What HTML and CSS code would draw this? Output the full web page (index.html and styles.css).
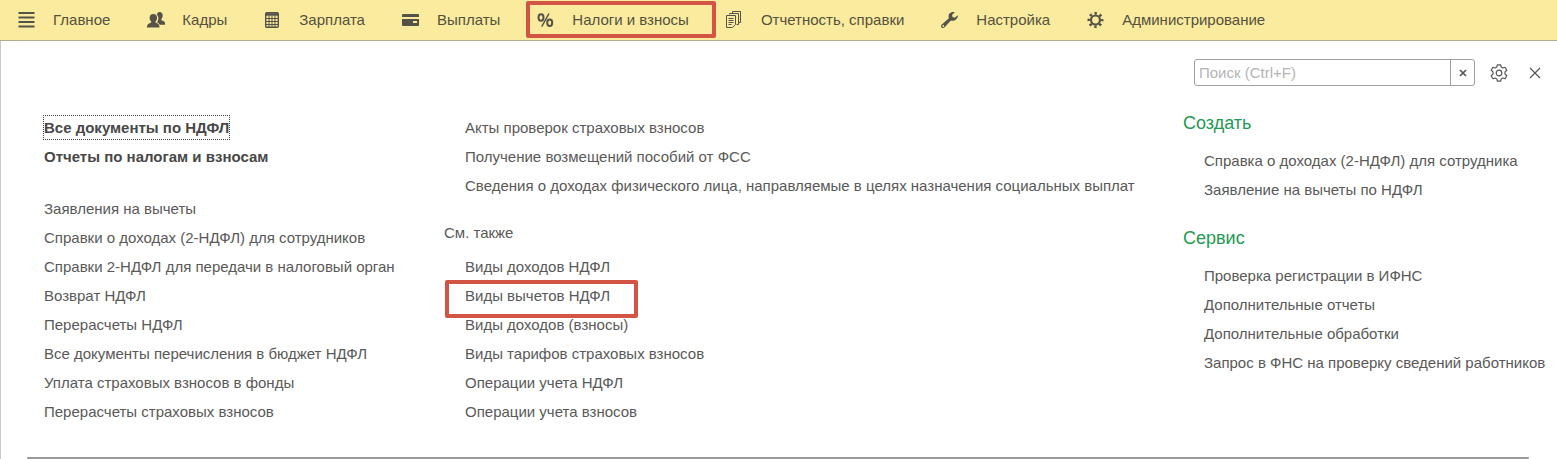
FILE: index.html
```html
<!DOCTYPE html>
<html lang="ru">
<head>
    <meta charset="UTF-8">
    <meta name="viewport" content="width=device-width, initial-scale=1.0">
    <title>Налоги и взносы</title>
    <link rel="stylesheet" href="styles.css">
</head>
<body>

<nav class="sections">
    <a href="#">
        <svg viewBox="0 0 18 18"><path d="M.5 2h16M.5 6.500h16M.5 11h16M.5 15.500h16" stroke="currentColor" stroke-width="2"/></svg>
        Главное
    </a>
    <a href="#">
        <svg viewBox="0 0 18 18">
            <path d="M12.500 1c2 0 3.200 1.500 3.200 3.500 0 1.600-.6 2.700-1.300 3.400v1.300c1.800.7 4 1.300 4 4.500h-5.700c-.6-1.300-1.500-2-2.700-2.500 1.200-1.400 1.500-3 1.300-4.900-.1-1-.6-1.900-1.500-2.500.4-1.800 1.300-2.800 2.700-2.800z"/>
            <path d="M6.300 3c2.300 0 3.800 1.500 3.800 3.800 0 1.700-.8 3-1.600 3.700v1c2 .8 4 1.500 4 5H0c0-3.500 2.200-4.200 4.200-5v-1c-.8-.7-1.600-2-1.600-3.700C2.600 4.500 4 3 6.300 3z"/>
        </svg>
        Кадры
    </a>
    <a href="#">
        <svg viewBox="0 0 18 18">
            <rect class="outline" x="1.700" y="1.700" width="12.600" height="14.600" rx="1" stroke-width="1.400"/>
            <path d="M2 3.500h12" stroke="currentColor" stroke-width="2.500"/>
            <path d="M5 5v11M8 5v11M11 5v11M2 7.500h12M2 10.500h12M2 13.500h12" stroke="currentColor"/>
        </svg>
        Зарплата
    </a>
    <a href="#">
        <svg viewBox="0 0 18 18"><path d="M1 3h15q1 0 1 1v2H0V4q0-1 1-1zM0 8h17v6q0 1-1 1H1q-1 0-1-1zm11 2v2h4v-2z" fill-rule="evenodd"/></svg>
        Выплаты
    </a>
    <a href="#" class="current">
        <svg viewBox="0 0 18 18">
            <g class="outline">
                <ellipse cx="4" cy="6.500" rx="2.500" ry="3.200" stroke-width="2"/>
                <ellipse cx="12.700" cy="11.700" rx="2.500" ry="3.200" stroke-width="2"/>
                <path d="M12 2.500L4.700 15.700" stroke-width="1.500"/>
            </g>
        </svg>
        Налоги и взносы
    </a>
    <a href="#">
        <svg viewBox="0 0 18 18">
            <g class="outline">
                <path d="M3.500 3.500v-1h9v11h-2M6.500 2.500v-2h8v11h-2"/>
                <path d="M.500 4.500h9v9l-3 3h-6z"/>
                <path d="M2.500 7.500h5M2.500 9.500h5M2.500 11.500h5M2.500 13.500h3"/>
            </g>
        </svg>
        Отчетность, справки
    </a>
    <a href="#">
        <svg viewBox="0 0 18 18"><path d="M16.700 4.300l-2.900 2.500-2.300-.7-.5-2.200 2.800-2.600c-2-.7-4-.2-5.300 1.300C7.400 4 7.300 5.700 7.900 7.300L.8 13.400c-1 .9-1 2.200-.2 3 .9.900 2.200.9 3-.1l6.300-6.900c1.700.6 3.700.3 5.100-1 1.400-1.100 2-2.600 1.700-4.100zM2.300 14.100a.9.900 0 1 1 0 1.800.9.900 0 0 1 0-1.800z" fill-rule="evenodd"/></svg>
        Настройка
    </a>
    <a href="#">
        <svg viewBox="0 0 18 18">
            <g class="outline">
                <circle cx="8.500" cy="9" r="4.500" stroke-width="2.200"/>
                <circle cx="8.500" cy="9" r="6.700" stroke-width="2.600" stroke-dasharray="2.400 2.862" stroke-dashoffset="1.200"/>
            </g>
        </svg>
        Администрирование
    </a>
</nav>

<main class="panel">
    <form class="tools">
        <div class="search">
            <input type="text" placeholder="Поиск (Ctrl+F)" aria-label="Поиск">
            <button type="reset" aria-label="Очистить">
                <svg viewBox="0 0 8 8"><path d="M1 1l6 6M7 1L1 7" stroke="currentColor" stroke-width="1.700"/></svg>
            </button>
        </div>
        <button type="button" class="tool" aria-label="Настройка панели">
            <svg viewBox="0 0 18 18">
                <g class="outline" stroke-width="1.200" stroke-linejoin="round">
                    <path d="M7.300.8h3.400l.5 2.300 1.600.9 2.300-.7 1.700 2.900L15 7.900v2.200l1.800 1.700-1.700 2.900-2.300-.7-1.600.9-.5 2.300H7.300l-.5-2.300-1.600-.9-2.300.7-1.700-2.900L3 10.100V7.900L1.200 6.200l1.700-2.900 2.300.7 1.600-.9z"/>
                    <circle cx="9" cy="9" r="2.800"/>
                </g>
            </svg>
        </button>
        <button type="button" class="tool" aria-label="Закрыть">
            <svg viewBox="0 0 18 18"><path d="M4 4l10 10M14 4L4 14" stroke="currentColor" stroke-width="1.200"/></svg>
        </button>
    </form>

    <div class="columns">
        <div class="column">
            <ul class="important">
                <li><a href="#" class="focused">Все документы по НДФЛ</a></li>
                <li><a href="#">Отчеты по налогам и взносам</a></li>
            </ul>
            <ul>
                <li><a href="#">Заявления на вычеты</a></li>
                <li><a href="#">Справки о доходах (2-НДФЛ) для сотрудников</a></li>
                <li><a href="#">Справки 2-НДФЛ для передачи в налоговый орган</a></li>
                <li><a href="#">Возврат НДФЛ</a></li>
                <li><a href="#">Перерасчеты НДФЛ</a></li>
                <li><a href="#">Все документы перечисления в бюджет НДФЛ</a></li>
                <li><a href="#">Уплата страховых взносов в фонды</a></li>
                <li><a href="#">Перерасчеты страховых взносов</a></li>
            </ul>
        </div>

        <div class="column nested">
            <ul>
                <li><a href="#">Акты проверок страховых взносов</a></li>
                <li><a href="#">Получение возмещений пособий от ФСС</a></li>
                <li><a href="#">Сведения о доходах физического лица, направляемые в целях назначения социальных выплат</a></li>
            </ul>
            <h3>См. также</h3>
            <ul>
                <li><a href="#">Виды доходов НДФЛ</a></li>
                <li><a href="#" class="marked">Виды вычетов НДФЛ</a></li>
                <li><a href="#">Виды доходов (взносы)</a></li>
                <li><a href="#">Виды тарифов страховых взносов</a></li>
                <li><a href="#">Операции учета НДФЛ</a></li>
                <li><a href="#">Операции учета взносов</a></li>
            </ul>
        </div>

        <aside class="nested">
            <h2>Создать</h2>
            <ul>
                <li><a href="#">Справка о доходах (2-НДФЛ) для сотрудника</a></li>
                <li><a href="#">Заявление на вычеты по НДФЛ</a></li>
            </ul>
            <h2>Сервис</h2>
            <ul>
                <li><a href="#">Проверка регистрации в ИФНС</a></li>
                <li><a href="#">Дополнительные отчеты</a></li>
                <li><a href="#">Дополнительные обработки</a></li>
                <li><a href="#">Запрос в ФНС на проверку сведений работников</a></li>
            </ul>
        </aside>
    </div>

    <hr>
</main>

</body>
</html>
```
FILE: styles.css
```css
:root {
    --yellow: #FAEB9E;
    --text: #595959;
    --green: #229A52;
    --red: #D25445;
}

* {
    box-sizing: border-box;
}

body {
    margin: 0;
    font-family: "Liberation Sans", Arial, sans-serif;
    font-size: 15px;
    line-height: 29px;
    color: var(--text);
    background-color: #fff;
}

a {
    color: inherit;
    text-decoration: none;
    white-space: nowrap;
}

svg {
    display: block;
    fill: currentColor;
}

.outline {
    fill: none;
    stroke: currentColor;
}

/* Sections bar */
.sections {
    display: flex;
    gap: 37px;
    height: 41px;
    padding: 0 18px 1px;
    background-color: var(--yellow);
    border-bottom: 1px solid #B5AA8E;
}

.sections a {
    position: relative;
    display: flex;
    align-items: center;
    gap: 17px;
    color: #55513F;
}

.sections svg {
    width: 18px;
    height: 18px;
    color: #555248;
}

.sections .current::after,
.marked::after {
    content: "";
    position: absolute;
    border: 4px solid var(--red);
    border-radius: 2px;
}

.sections .current::after {
    inset: 1px -27px 1px -11px;
}

/* Functions panel */
.panel {
    border-left: 1px solid #C8C8C8;
}

.tools {
    display: flex;
    justify-content: flex-end;
    align-items: center;
    gap: 12px;
    padding: 18px 10px 0 0;
}

.search {
    display: flex;
    width: 281px;
    height: 27px;
    border: 1px solid #A0A0A0;
    border-radius: 3px;
}

.search input {
    flex: 1;
    min-width: 0;
    padding: 0 4px;
    border: none;
    outline: none;
    background: none;
    font: inherit;
    color: var(--text);
}

.search input::placeholder {
    color: #B4B4B4;
}

button {
    padding: 0;
    border: none;
    background: none;
    color: #555;
    cursor: pointer;
}

.search button {
    display: grid;
    place-items: center;
    width: 24px;
    border-left: 1px solid #A0A0A0;
}

.search button svg {
    width: 8px;
    height: 8px;
}

.tool {
    display: grid;
    place-items: center;
    width: 24px;
}

.tool svg {
    width: 18px;
    height: 18px;
}

.columns {
    display: grid;
    grid-template-columns: 400px 1fr 374px;
    padding: 23px 0 31px 43px;
}

.column {
    padding-top: 4px;
}

ul {
    margin: 0;
    padding: 0;
    list-style: none;
}

.nested ul {
    padding-left: 21px;
}

.important {
    margin-bottom: 23px;
    font-weight: bold;
    color: #484848;
}

.focused {
    padding: 3px 0;
    outline: 1px dotted #444;
}

h2, h3 {
    margin: 0;
    font-weight: normal;
}

h2 {
    margin-bottom: 8px;
    font-size: 18px;
    color: var(--green);
}

ul + h2 {
    margin-top: 20px;
}

h3 {
    margin: 18px 0 5px;
    font-size: 15px;
}

.marked {
    position: relative;
}

.marked::after {
    inset: -7px -28px -14px -20px;
}

hr {
    height: 2px;
    margin: 0 28px 0 26px;
    border: none;
    border-radius: 2px;
    background-color: #999;
}
```
